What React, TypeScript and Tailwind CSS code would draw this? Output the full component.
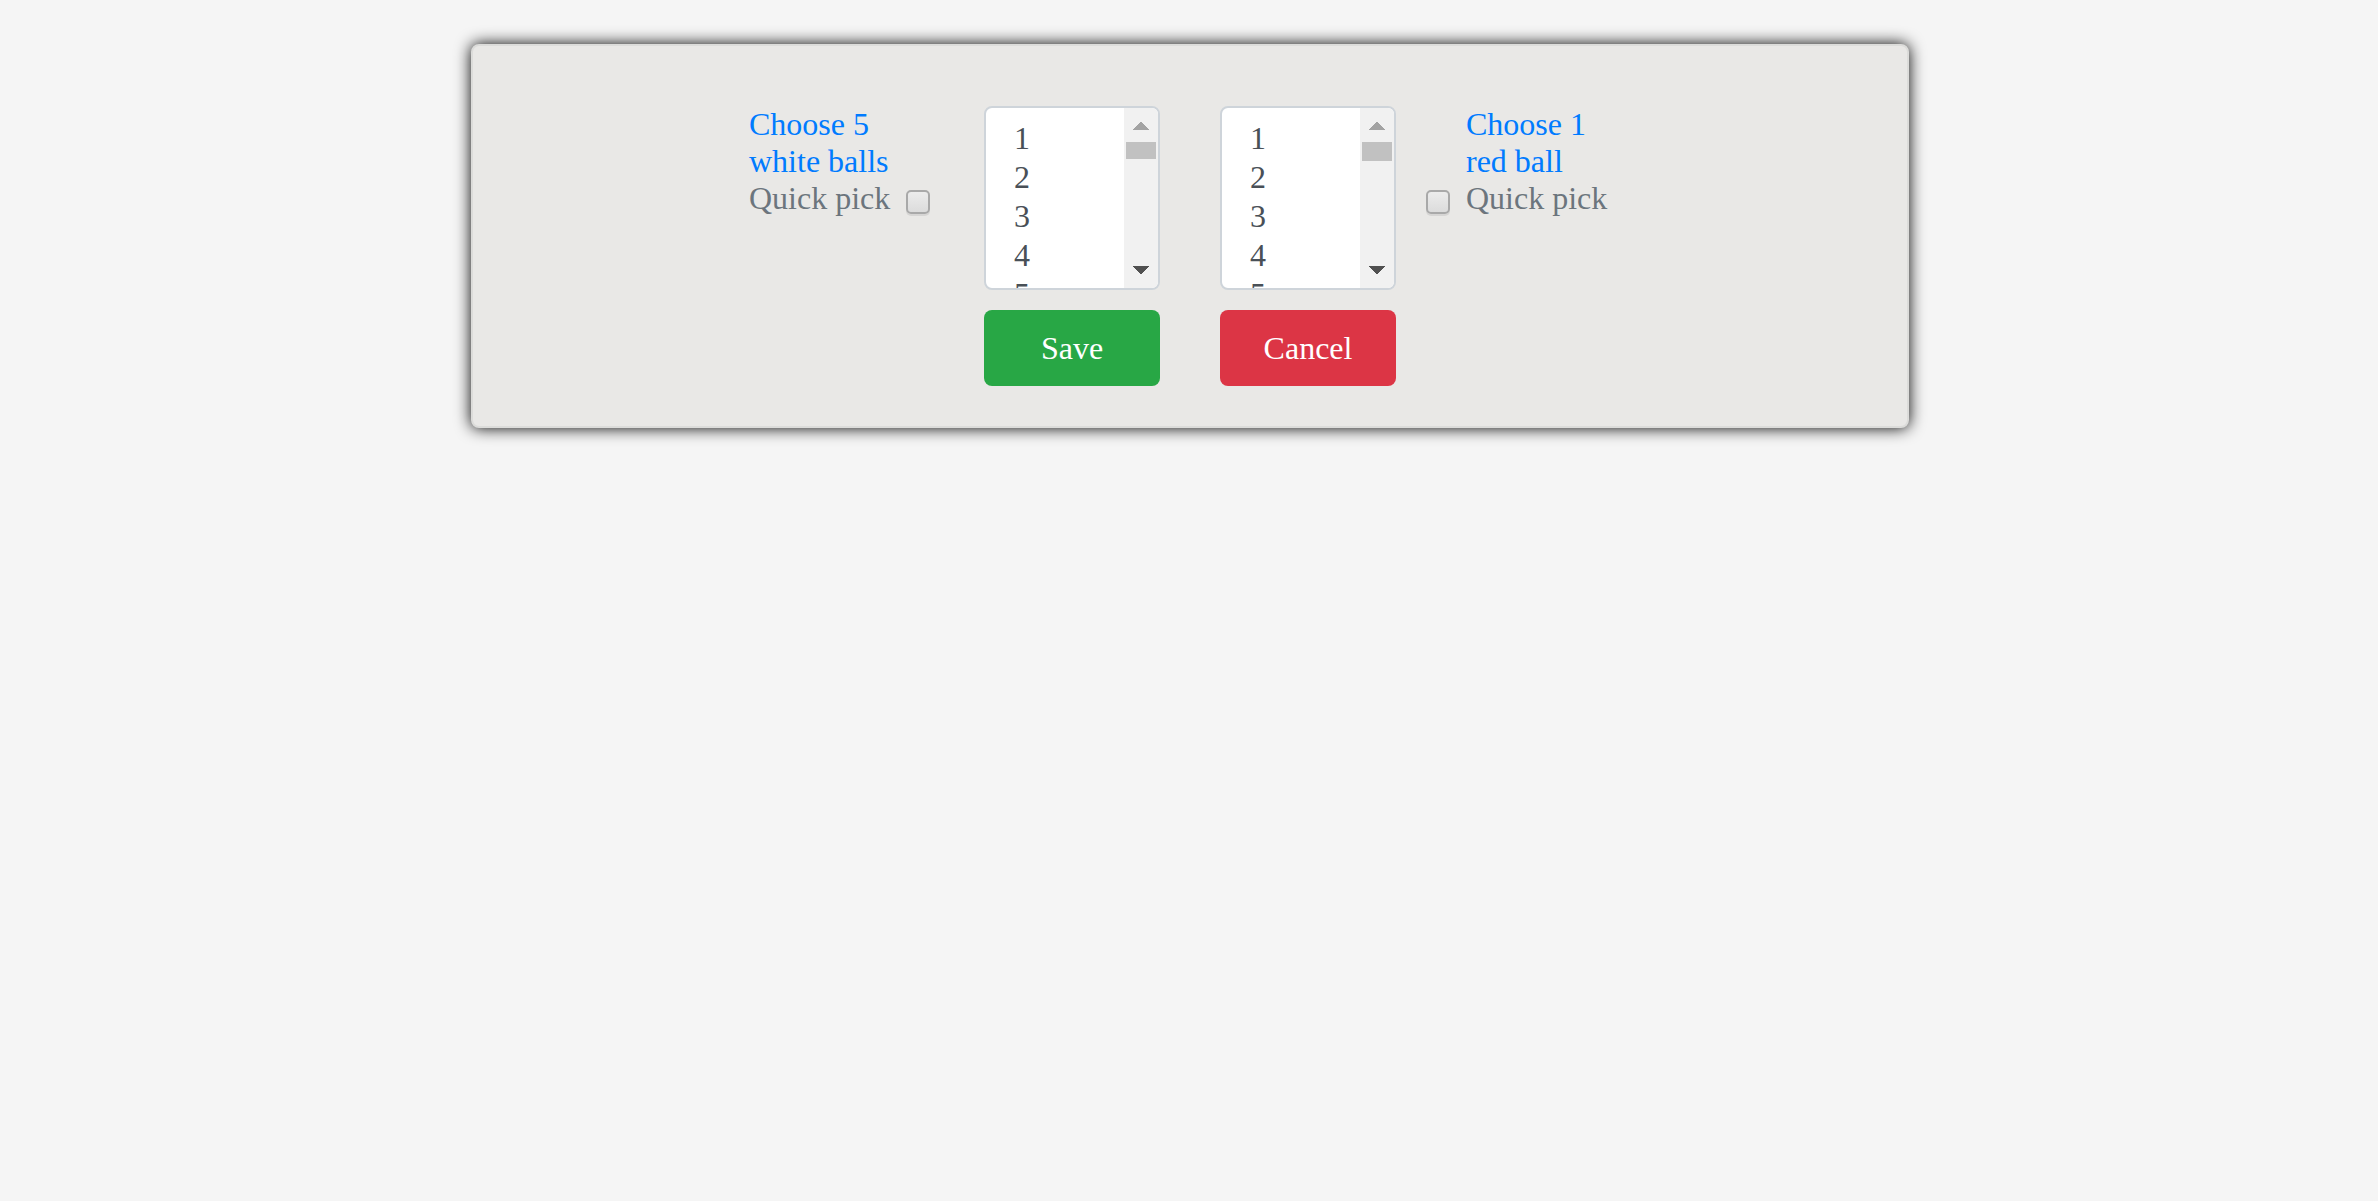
type BallPickerProps = { count: number; thumb: string };

function BallList({ count, thumb }: BallPickerProps) {
  return (
    <div className="flex h-[184px] w-[176px] overflow-hidden rounded-lg border-2 border-[#ced4da] bg-white">
      <div className="h-full flex-1 overflow-hidden pt-3 pl-7 text-[#495057]">
        {Array.from({ length: count }, (_, i) => (
          <div key={i} className="h-[39px] leading-[37px]">{i + 1}</div>
        ))}
      </div>
      <div className="flex w-[34px] flex-col items-center bg-[#f1f1f1]">
        <svg className="mt-[14px] block h-2 w-4" viewBox="0 0 16 8" shapeRendering="crispEdges">
          <path d="M-0.6 8 L7 0 H9 L16.6 8 Z" fill="#a3a3a3" />
        </svg>
        <div className={`mt-3 w-[30px] bg-[#c1c1c1] ${thumb}`} />
        <svg className="mt-auto mb-[14px] block h-2 w-4" viewBox="0 0 16 8" shapeRendering="crispEdges">
          <path d="M-0.6 0 L7 8 H9 L16.6 0 Z" fill="#505050" />
        </svg>
      </div>
    </div>
  );
}

function QuickCheck() {
  return (
    <input
      type="checkbox"
      aria-label="Quick pick"
      className="block h-6 w-6 shrink-0 appearance-none rounded-[5px] border-2 border-[#a9a9a9] bg-linear-to-b from-[#ececec] to-[#dcdcdc] shadow-[0_2px_0_rgba(0,0,0,0.08)]"
    />
  );
}

export default function App() {
  return (
    <main className="min-h-[1201px] bg-[#f5f5f5] pt-11 pl-[471px] font-['Liberation_Serif',serif] text-[32px] leading-[37px]">
      <section className="flex h-[384px] w-[1438px] items-start rounded-lg border-2 border-[#dcdcda] bg-[#e9e8e6] pt-[60px] pl-[276px] shadow-[0_0_16px_#000]">
        <div className="flex w-[235px] items-end">
          <div className="w-[157px] whitespace-nowrap">
            <div className="text-[#007bff]">Choose 5<br />white balls</div>
            <div className="text-[#6c757d]">Quick pick</div>
          </div>
          <div className="pb-[3px]"><QuickCheck /></div>
        </div>
        <div className="flex w-[176px] flex-col gap-5">
          <BallList count={5} thumb="h-[17px]" />
          <button className="h-[76px] rounded-lg bg-[#28a745] pt-px text-white">Save</button>
        </div>
        <div className="ml-[60px] flex w-[176px] flex-col gap-5">
          <BallList count={5} thumb="h-[19px]" />
          <button className="h-[76px] rounded-lg bg-[#dc3545] pt-px text-white">Cancel</button>
        </div>
        <div className="ml-[30px] flex items-end">
          <div className="w-10 pb-[3px]"><QuickCheck /></div>
          <div className="whitespace-nowrap">
            <div className="text-[#007bff]">Choose 1<br />red ball</div>
            <div className="text-[#6c757d]">Quick pick</div>
          </div>
        </div>
      </section>
    </main>
  );
}
